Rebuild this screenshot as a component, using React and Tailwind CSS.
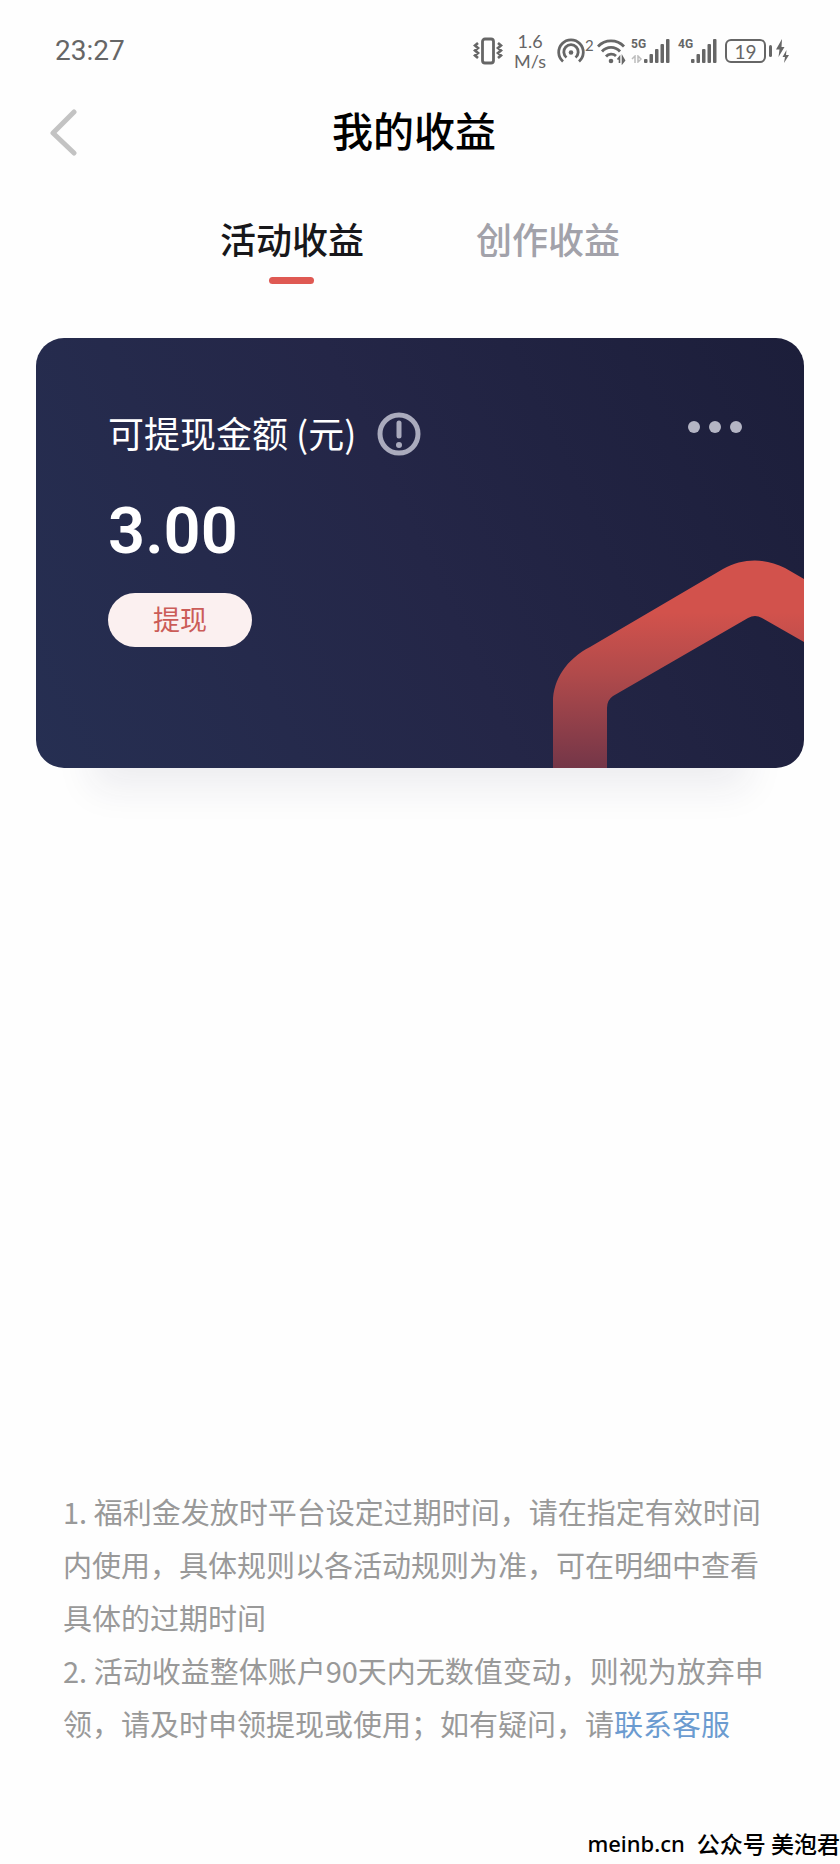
import React, { useState } from "react";
import clsx from "clsx";

const TABS = [
  { id: "activity", label: "活动收益" },
  { id: "creation", label: "创作收益" },
];

function VibrateIcon() {
  return (
    <svg className="h-7 w-[30px]" viewBox="0 0 30 28" fill="none" stroke="currentColor">
      <rect x="9.5" y="2" width="11" height="24" rx="2.5" strokeWidth="2.8" />
      <path d="M5 6 2 8.5 5 11 2 13.5 5 16 2 18.5 5 21M25 6l3 2.5-3 2.5 3 2.5-3 2.5 3 2.5-3 2.5" strokeWidth="2.6" />
    </svg>
  );
}

function HotspotIcon() {
  return (
    <svg className="h-7 w-7" viewBox="0 0 28 28" fill="none" stroke="currentColor" strokeWidth="2.8">
      <path d="M6 24.5A12.3 12.3 0 1 1 22 24.5" />
      <path d="M9.5 20.5A7.2 7.2 0 1 1 18.5 20.5" />
      <circle cx="14" cy="15.5" r="2.3" fill="currentColor" stroke="none" />
    </svg>
  );
}

function WifiIcon() {
  return (
    <svg className="h-7 w-[30px]" viewBox="0 0 30 28" fill="none" stroke="currentColor" strokeWidth="2.8">
      <path d="M1 9.5a18 18 0 0 1 26 0M5 14.5a12 12 0 0 1 18 0M9 19.5a7 7 0 0 1 10-.5" />
      <circle cx="14" cy="24" r="2.3" fill="currentColor" stroke="none" />
      <path d="M22.5 26v-6l-2 2.5M25.5 20v6l2-2.5z" strokeWidth="1.6" />
    </svg>
  );
}

function SignalBars() {
  return (
    <svg className="h-6 w-[26px]" viewBox="0 0 26 24" fill="currentColor">
      <rect x="0" y="20" width="3.5" height="4" rx="1" />
      <rect x="5.5" y="15" width="3.5" height="9" rx="1" />
      <rect x="11" y="10" width="3.5" height="14" rx="1" />
      <rect x="16.5" y="5" width="3.5" height="19" rx="1" />
      <rect x="22" y="0" width="3.5" height="24" rx="1" />
    </svg>
  );
}

function Signal({ network, transfer }) {
  return (
    <div className="flex items-end">
      <div className="flex h-6 w-[13px] flex-col justify-between font-['Roboto'] text-[12px] leading-[11px] font-bold">
        <span>{network}</span>
        {transfer ? (
          <svg className="h-2 w-3" viewBox="0 0 12 8" fill="none" stroke="#bdbdbd" strokeWidth="1.5">
            <path d="M4 8V1L1 4M7 1v6l3-3z" />
          </svg>
        ) : null}
      </div>
      <SignalBars />
    </div>
  );
}

function Battery({ level }) {
  return (
    <div className="flex items-center">
      <span className="flex h-6 w-[41px] items-center justify-center rounded-md border-2 border-current text-[19px] leading-none">
        {level}
      </span>
      <span className="ml-[3px] h-3 w-[3px] rounded-xs bg-current" />
      <svg className="ml-1 h-6 w-[13px]" viewBox="0 0 13 24" fill="currentColor">
        <path d="M6 0 0 10.5h3.5L2.5 18 8.5 8H5.5z" />
        <path d="M10.5 11 6.5 18h2.5L8 24l5-8h-3z" />
      </svg>
    </div>
  );
}

function StatusBar() {
  return (
    <div className="flex h-[102px] items-center justify-between pr-[51px] pl-[55px] text-[#666]">
      <span className="font-['Roboto'] text-[28px]">23:27</span>
      <div className="flex items-center font-['Lato']">
        <VibrateIcon />
        <div className="mx-[11px] text-center text-[18px] leading-5">
          <div>1.6</div>
          <div>M/s</div>
        </div>
        <HotspotIcon />
        <span className="mb-3 w-3 text-[15px] leading-none">2</span>
        <WifiIcon />
        <div className="ml-1 flex items-center gap-2">
          <Signal network="5G" transfer />
          <Signal network="4G" />
          <Battery level={19} />
        </div>
      </div>
    </div>
  );
}

function Header() {
  return (
    <header className="flex items-start pr-[60px] pl-12">
      <button type="button" aria-label="返回" className="mt-1.5 text-[#c3c3c3]">
        <svg className="h-12 w-[30px]" viewBox="0 0 30 48" fill="none" stroke="currentColor" strokeWidth="5" strokeLinecap="round" strokeLinejoin="round">
          <path d="M26 4 5 25l21 20" />
        </svg>
      </button>
      <h1 className="flex-1 pr-[30px] text-center text-[41px] leading-[54px] font-medium text-black">
        我的收益
      </h1>
    </header>
  );
}

function Tabs({ active, onChange }) {
  return (
    <nav className="mt-[58px] flex justify-center gap-28">
      {TABS.map((tab) => (
        <button
          key={tab.id}
          type="button"
          onClick={() => onChange(tab.id)}
          className={clsx(
            "flex flex-col items-center text-[36px] leading-[48px] font-medium",
            tab.id === active ? "text-[#17171a]" : "text-[#a2a2aa]"
          )}
        >
          {tab.label}
          <span
            className={clsx(
              "mt-[15px] h-[7px] w-[45px] rounded-full",
              tab.id === active ? "bg-[#df5953]" : "bg-transparent"
            )}
          />
        </button>
      ))}
    </nav>
  );
}

function CardPattern() {
  return (
    <svg className="absolute right-0 bottom-0 h-[208px] w-[251px]" viewBox="0 0 251 208" aria-hidden="true">
      <defs>
        <linearGradient id="ribbon" x1="0" y1="0" x2="0" y2="1">
          <stop offset="0.25" stopColor="#d2524c" />
          <stop offset="0.55" stopColor="#b04a4b" />
          <stop offset="1" stopColor="#743648" />
        </linearGradient>
      </defs>
      <path
        fill="url(#ribbon)"
        d="M0 208V142C0 119 14 99 37 87L170 9C190-2 212-2 232 8L251 19V82L209 58Q202 54 195 58L60 136Q54 140 54 148V208Z"
      />
    </svg>
  );
}

function BalanceCard({ amount }) {
  return (
    <section className="relative mx-9 mt-[54px] min-h-[430px] rounded-[28px] bg-linear-65 from-[#262f52] via-[#242647] to-[#1c1e3a] px-[72px] pt-[70px] text-white shadow-[0_76px_36px_-56px_rgba(40,44,80,0.08)]">
      <div className="absolute inset-0 overflow-hidden rounded-[28px]">
        <CardPattern />
      </div>
      <div className="relative flex items-start justify-between">
        <div className="flex items-start gap-[21px]">
          <h2 className="text-[36px] leading-[48px]">可提现金额 (元)</h2>
          <button type="button" aria-label="说明" className="mt-1 text-[#aaabbd]">
            <svg className="h-11 w-11" viewBox="0 0 44 44" fill="none" stroke="currentColor" strokeWidth="5">
              <circle cx="22" cy="22" r="19" />
              <path d="M22 11v13" strokeLinecap="round" />
              <circle cx="22" cy="33" r="3" fill="currentColor" stroke="none" />
            </svg>
          </button>
        </div>
        <button type="button" aria-label="更多" className="mt-[13px] -mr-2.5 flex gap-[9px]">
          <span className="size-3 rounded-full bg-[#b4b5c4]" />
          <span className="size-3 rounded-full bg-[#b4b5c4]" />
          <span className="size-3 rounded-full bg-[#b4b5c4]" />
        </button>
      </div>
      <div className="relative mt-[42px] font-['Roboto'] text-[65px] leading-[66px] font-semibold">
        {amount}
      </div>
      <button
        type="button"
        className="relative mt-[29px] flex h-[54px] w-36 justify-center rounded-full bg-[#fbf0f0] text-[27px] leading-[52px] text-[#cb5c58]"
      >
        提现
      </button>
    </section>
  );
}

function Notes() {
  return (
    <section className="mt-auto mb-[72px] px-[63px] text-[29px] leading-[53px] text-[#999]">
      <p>1. 福利金发放时平台设定过期时间，请在指定有效时间内使用，具体规则以各活动规则为准，可在明细中查看具体的过期时间</p>
      <p>
        2. 活动收益整体账户90天内无数值变动，则视为放弃申领，请及时申领提现或使用；如有疑问，请
        <a href="#service" className="text-[#6b9bd0]">联系客服</a>
      </p>
    </section>
  );
}

export default function App() {
  const [tab, setTab] = useState("activity");

  return (
    <div
      lang="zh-CN"
      className="flex min-h-screen flex-col bg-[#fefefe] font-['Noto_Sans_CJK_SC',sans-serif]"
    >
      <StatusBar />
      <Header />
      <Tabs active={tab} onChange={setTab} />
      <BalanceCard amount="3.00" />
      <Notes />
      <footer className="flex justify-end gap-3 leading-[42px] font-medium text-black">
        <span className="font-['Noto_Sans'] text-[22px]">meinb.cn</span>
        <span className="text-[23px]">公众号 美泡君</span>
      </footer>
    </div>
  );
}
